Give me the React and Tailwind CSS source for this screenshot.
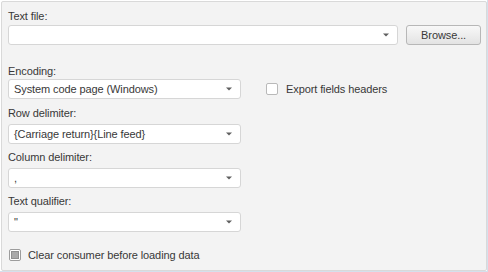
import React from "react";

function Arrow() {
  return (
    <svg width="6" height="4" viewBox="0 0 6 4" className="shrink-0">
      <path d="M0 0.5 H6 L3 3.5 Z" fill="#5f5f5f" />
    </svg>
  );
}

function Select({ value, className = "" }) {
  return (
    <div
      className={`h-[20px] flex items-center justify-between bg-white border border-[#d6d6d6] rounded-[3px] pl-[5px] pr-[8px] ${className}`}
    >
      <span className="leading-[14px] whitespace-nowrap">{value}</span>
      <Arrow />
    </div>
  );
}

function Label({ children, className = "" }) {
  return <div className={`h-[14px] leading-[14px] ${className}`}>{children}</div>;
}

export default function App() {
  return (
    <div
      className="w-[488px] h-[272px] bg-white text-[11px] text-[#383838] tracking-[-0.1px]"
      style={{ fontFamily: '"Liberation Sans", Arial, sans-serif' }}
    >
      {/* outer frame */}
      <div className="w-[488px] h-[272px] pl-[1px] pt-[1px] border-r border-b border-[#d4e0ec]">
        <div className="w-[486px] h-[270px] bg-[#f3f3f3] border border-[#d9d9d9] rounded-[2px] pl-[6px] pr-[5px]">
          {/* Text file */}
          <Label className="mt-[7px]">Text file:</Label>
          <div className="mt-[2px] flex items-center gap-[8px]">
            <Select value="" className="w-[391px]" />
            <button className="w-[75px] h-[20px] rounded-[3px] border border-[#b7b7b7] bg-gradient-to-b from-[#f8f8f8] to-[#e3e3e3] text-[#383838] leading-[14px]">
              Browse...
            </button>
          </div>

          {/* Encoding + export headers */}
          <Label className="mt-[19px]">Encoding:</Label>
          <div className="mt-[1px] flex items-center">
            <Select value="System code page (Windows)" className="w-[233px]" />
            <div className="ml-[25px] flex items-center gap-[8px]">
              <div className="w-[12px] h-[12px] bg-white border border-[#b9b9b9] rounded-[2px]" />
              <span className="leading-[14px]">Export fields headers</span>
            </div>
          </div>

          {/* Row delimiter */}
          <Label className="mt-[7px]">Row delimiter:</Label>
          <Select value="{Carriage return}{Line feed}" className="mt-[4px] w-[233px]" />

          {/* Column delimiter */}
          <Label className="mt-[6px]">Column delimiter:</Label>
          <Select value="," className="mt-[4px] w-[233px]" />

          {/* Text qualifier */}
          <Label className="mt-[6px]">Text qualifier:</Label>
          <Select value={'"'} className="mt-[4px] w-[233px]" />

          {/* Clear consumer */}
          <div className="mt-[16px] flex items-center gap-[7px] pl-[1px]">
            <div className="w-[12px] h-[12px] bg-white border border-[#9c9c9c] rounded-[2px] flex items-center justify-center">
              <div className="w-[8px] h-[8px] bg-[#a9a9a9] border border-[#8f8f8f]" />
            </div>
            <span className="leading-[14px]">Clear consumer before loading data</span>
          </div>
        </div>
      </div>
    </div>
  );
}
